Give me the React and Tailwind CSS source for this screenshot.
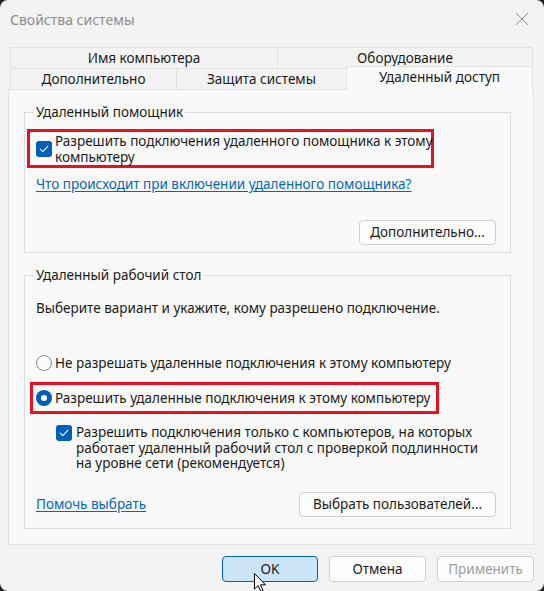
import React from "react";

const font = { fontFamily: '"Noto Sans", "Open Sans", sans-serif' };

function Check({ className = "" }) {
  return (
    <span className={"flex h-[16px] w-[16px] shrink-0 items-center justify-center rounded-[3px] bg-[#005fb8] " + className}>
      <svg width="10" height="8" viewBox="0 0 10 8" fill="none">
        <path d="M1.2 4.2 L3.8 6.6 L8.8 1.4" stroke="white" strokeWidth="1.1" strokeLinecap="round" strokeLinejoin="round" />
      </svg>
    </span>
  );
}

function Btn({ children, className = "" }) {
  return (
    <div className={"flex h-[25px] items-center justify-center whitespace-nowrap rounded-[4px] border border-[#d0d0d0] bg-[#fdfdfd] text-[13.5px] text-[#1b1b1b] " + className}>
      {children}
    </div>
  );
}

export default function App() {
  return (
    <div className="h-[591px] w-[544px] bg-[#1f1f1f]" style={font}>
      <div className="relative flex h-[591px] w-[544px] flex-col overflow-hidden rounded-[8px] bg-[#f3f3f3] text-[13.5px] text-[#1b1b1b]">
        {/* title bar */}
        <div className="flex h-[38px] items-center justify-between pl-[10px] pr-[15px]">
          <span className="text-[14px] text-[#8c8c8c]">Свойства системы</span>
          <svg width="14" height="14" viewBox="0 0 14 14">
            <path d="M1 1 L13 13 M13 1 L1 13" stroke="#8c8c8c" strokeWidth="1" />
          </svg>
        </div>

        {/* tabs */}
        <div className="ml-[10px] mt-[9px] w-[523px] whitespace-nowrap leading-[20px]">
          <div className="flex h-[21px]">
            <div className="flex w-[267px] items-center justify-center border-l border-t border-[#e1e1e1]">Имя компьютера</div>
            <div className="flex w-[256px] items-center justify-center border-l border-r border-t border-[#e1e1e1]">Оборудование</div>
          </div>
          <div className="flex h-[21px] items-end">
            <div className="flex h-[21px] w-[166px] items-center justify-center border-l border-t border-[#e1e1e1]">Дополнительно</div>
            <div className="flex h-[21px] w-[170px] items-center justify-center border-l border-t border-[#e1e1e1]">Защита системы</div>
            <div className="relative z-10 -mb-[1px] flex h-[24px] w-[187px] items-start justify-center border-l border-r border-t border-[#e1e1e1] bg-[#f9f9f9]">Удаленный доступ</div>
          </div>
        </div>

        {/* panel */}
        <div className="ml-[8px] flex h-[456px] w-[526px] flex-col whitespace-nowrap border border-[#e1e1e1] bg-[#f9f9f9] pl-[15px] pr-[22px]">
          {/* group 1 */}
          <fieldset className="mt-[13px] h-[150px] border border-[#dcdcdc] px-[2px]">
            <legend className="ml-[7px] px-[2px] leading-[18px]">Удаленный помощник</legend>
            <div className="mt-[8px] flex h-[39px] w-[407px] items-center gap-[3px] border-[3px] border-[#e81123] pl-[6px] leading-[16px]">
              <Check />
              <span>Разрешить подключения удаленного помощника к этому<br />компьютеру</span>
            </div>
            <div className="mt-[7px] pl-[9px] leading-[18px] text-[#0067c0] underline underline-offset-[2px]">
              Что происходит при включении удаленного помощника?
            </div>
            <div className="mt-[27px] flex justify-end pr-[12px]">
              <Btn className="w-[137px]">Дополнительно...</Btn>
            </div>
          </fieldset>

          {/* group 2 */}
          <fieldset className="mt-[13px] h-[263px] border border-[#dcdcdc] px-[2px]">
            <legend className="ml-[7px] px-[2px] leading-[18px]">Удаленный рабочий стол</legend>
            <div className="mt-[15px] pl-[9px] leading-[18px]">
              Выберите вариант и укажите, кому разрешено подключение.
            </div>
            <div className="mt-[37px] flex items-center gap-[3px] pl-[9px] leading-[18px]">
              <span className="h-[16px] w-[16px] shrink-0 rounded-full border border-[#8a8a8a] bg-[#fbfbfb]" />
              <span>Не разрешать удаленные подключения к этому компьютеру</span>
            </div>
            <div className="ml-[3px] mt-[10px] flex h-[32px] w-[409px] items-center gap-[3px] border-[3px] border-[#e81123] pl-[3px] leading-[18px]">
              <span className="flex h-[16px] w-[16px] shrink-0 items-center justify-center rounded-full bg-[#005fb8]">
                <span className="h-[6px] w-[6px] rounded-full bg-white" />
              </span>
              <span>Разрешить удаленные подключения к этому компьютеру</span>
            </div>
            <div className="mt-[11px] flex items-start gap-[4px] pl-[29px] leading-[15.5px]">
              <Check />
              <span>
                Разрешить подключения только с компьютеров, на которых<br />
                работает удаленный рабочий стол с проверкой подлинности<br />
                на уровне сети (рекомендуется)
              </span>
            </div>
            <div className="mt-[19px] flex items-center justify-between pl-[9px] pr-[12px]">
              <span className="leading-[18px] text-[#0067c0] underline underline-offset-[2px]">Помочь выбрать</span>
              <Btn className="mt-[1px] w-[197px]">Выбрать пользователей...</Btn>
            </div>
          </fieldset>
        </div>

        {/* bottom buttons */}
        <div className="mt-[11px] flex gap-[11px] pl-[222px]">
          <div className="flex h-[26px] w-[96px] items-center justify-center rounded-[4px] border border-[#005fb8] bg-[#cce4f7]">OK</div>
          <Btn className="h-[26px] w-[97px]">Отмена</Btn>
          <Btn className="h-[26px] w-[97px]"><span className="text-[#9d9d9d]">Применить</span></Btn>
        </div>

        {/* mouse cursor */}
        <svg className="absolute left-[254px] top-[573px]" width="14" height="20" viewBox="0 0 14 20">
          <path d="M0.5 0.5 L0.5 16 L4.2 12.6 L6.8 18.6 L9 17.6 L6.5 11.8 L11.5 11.8 Z" fill="white" stroke="black" strokeWidth="1" strokeLinejoin="round" />
        </svg>
      </div>
    </div>
  );
}
